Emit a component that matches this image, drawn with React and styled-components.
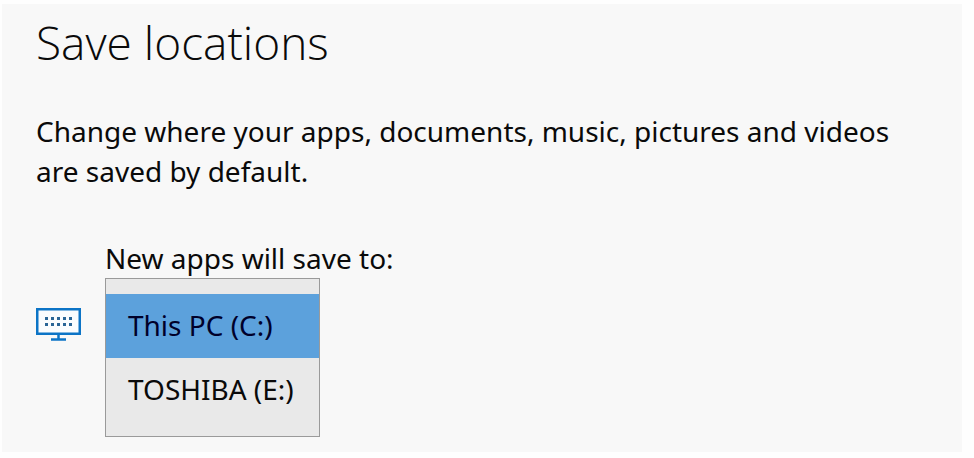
import React, { useState } from 'react'
import styled, { createGlobalStyle } from 'styled-components'

const GlobalStyle = createGlobalStyle`
    * {
        box-sizing: border-box;
    }

    body {
        margin: 0;
        background: #fefefe;
        color: #0a0a0a;
        font-family: "Noto Sans", "Open Sans", sans-serif;
    }
`;

const Page = styled.main`
    display: flex;
    min-height: 100vh;
    padding: 4px 12px 6px 2px;
`;

const Panel = styled.section`
    flex: 1;
    padding: 8px 56px 12px 34px;
    background: #f8f8f8;
`;

const Title = styled.h1`
    margin: 0 0 38px;
    font-family: "Open Sans", sans-serif;
    font-size: 46px;
    font-weight: 300;
    line-height: 61px;
`;

const Description = styled.p`
    margin: 0 0 48px;
    font-size: 28px;
    line-height: 40px;
`;

const LocationRow = styled.div`
    display: flex;
    align-items: center;
    gap: 24px;
`;

const DriveIcon = styled.svg`
    flex: none;
    width: 45px;
    height: 34px;
    margin-top: -26px;
`;

const Field = styled.div`
    display: flex;
    flex-direction: column;
    align-items: flex-start;
`;

const Label = styled.label`
    font-size: 28px;
    line-height: 39px;
`;

const DriveList = styled.select`
    width: 215px;
    height: 159px;
    padding: 15px 0;
    border: 1px solid #9a9a9a;
    border-radius: 0;
    outline: none;
    overflow: hidden;
    appearance: none;
    background: #e9e9e9;
    color: #0a0a0a;
    font-family: inherit;
    font-size: 28px;
`;

const DriveOption = styled.option`
    height: 64px;
    padding: 12px 22px;

    &:checked {
        background: linear-gradient(#5ca1dc, #5ca1dc);
        color: #00002a;
    }
`;

const drives = [
    { id: 'C', name: 'This PC (C:)' },
    { id: 'E', name: 'TOSHIBA (E:)' },
];

const dots = [10, 16, 22, 28, 34];

const App = () => {

    const [drive, setDrive] = useState('C');

    return (
        <>
            <GlobalStyle />
            <Page>
                <Panel>
                    <Title>Save locations</Title>
                    <Description>
                        Change where your apps, documents, music, pictures and videos are saved by default.
                    </Description>
                    <LocationRow>
                        <DriveIcon viewBox="0 0 45 34" aria-hidden="true">
                            <rect x="1.25" y="1.25" width="42.5" height="24.5" fill="#fafcfe" stroke="#0c74c6" strokeWidth="2.5" />
                            {dots.map((x) => (
                                <g key={x} fill="#2a6596">
                                    <rect x={x - 1} y="9" width="3" height="3" />
                                    <rect x={x - 1} y="15" width="3" height="3" />
                                </g>
                            ))}
                            <path d="M22.5 26v5M15 31.5h15" fill="none" stroke="#0c74c6" strokeWidth="2.5" />
                        </DriveIcon>
                        <Field>
                            <Label htmlFor="apps-drive">New apps will save to:</Label>
                            <DriveList
                                id="apps-drive"
                                size={2}
                                value={drive}
                                onChange={(e) => setDrive(e.target.value)}
                            >
                                {drives.map((item) => (
                                    <DriveOption key={item.id} value={item.id}>{item.name}</DriveOption>
                                ))}
                            </DriveList>
                        </Field>
                    </LocationRow>
                </Panel>
            </Page>
        </>
    )
}

export default App
